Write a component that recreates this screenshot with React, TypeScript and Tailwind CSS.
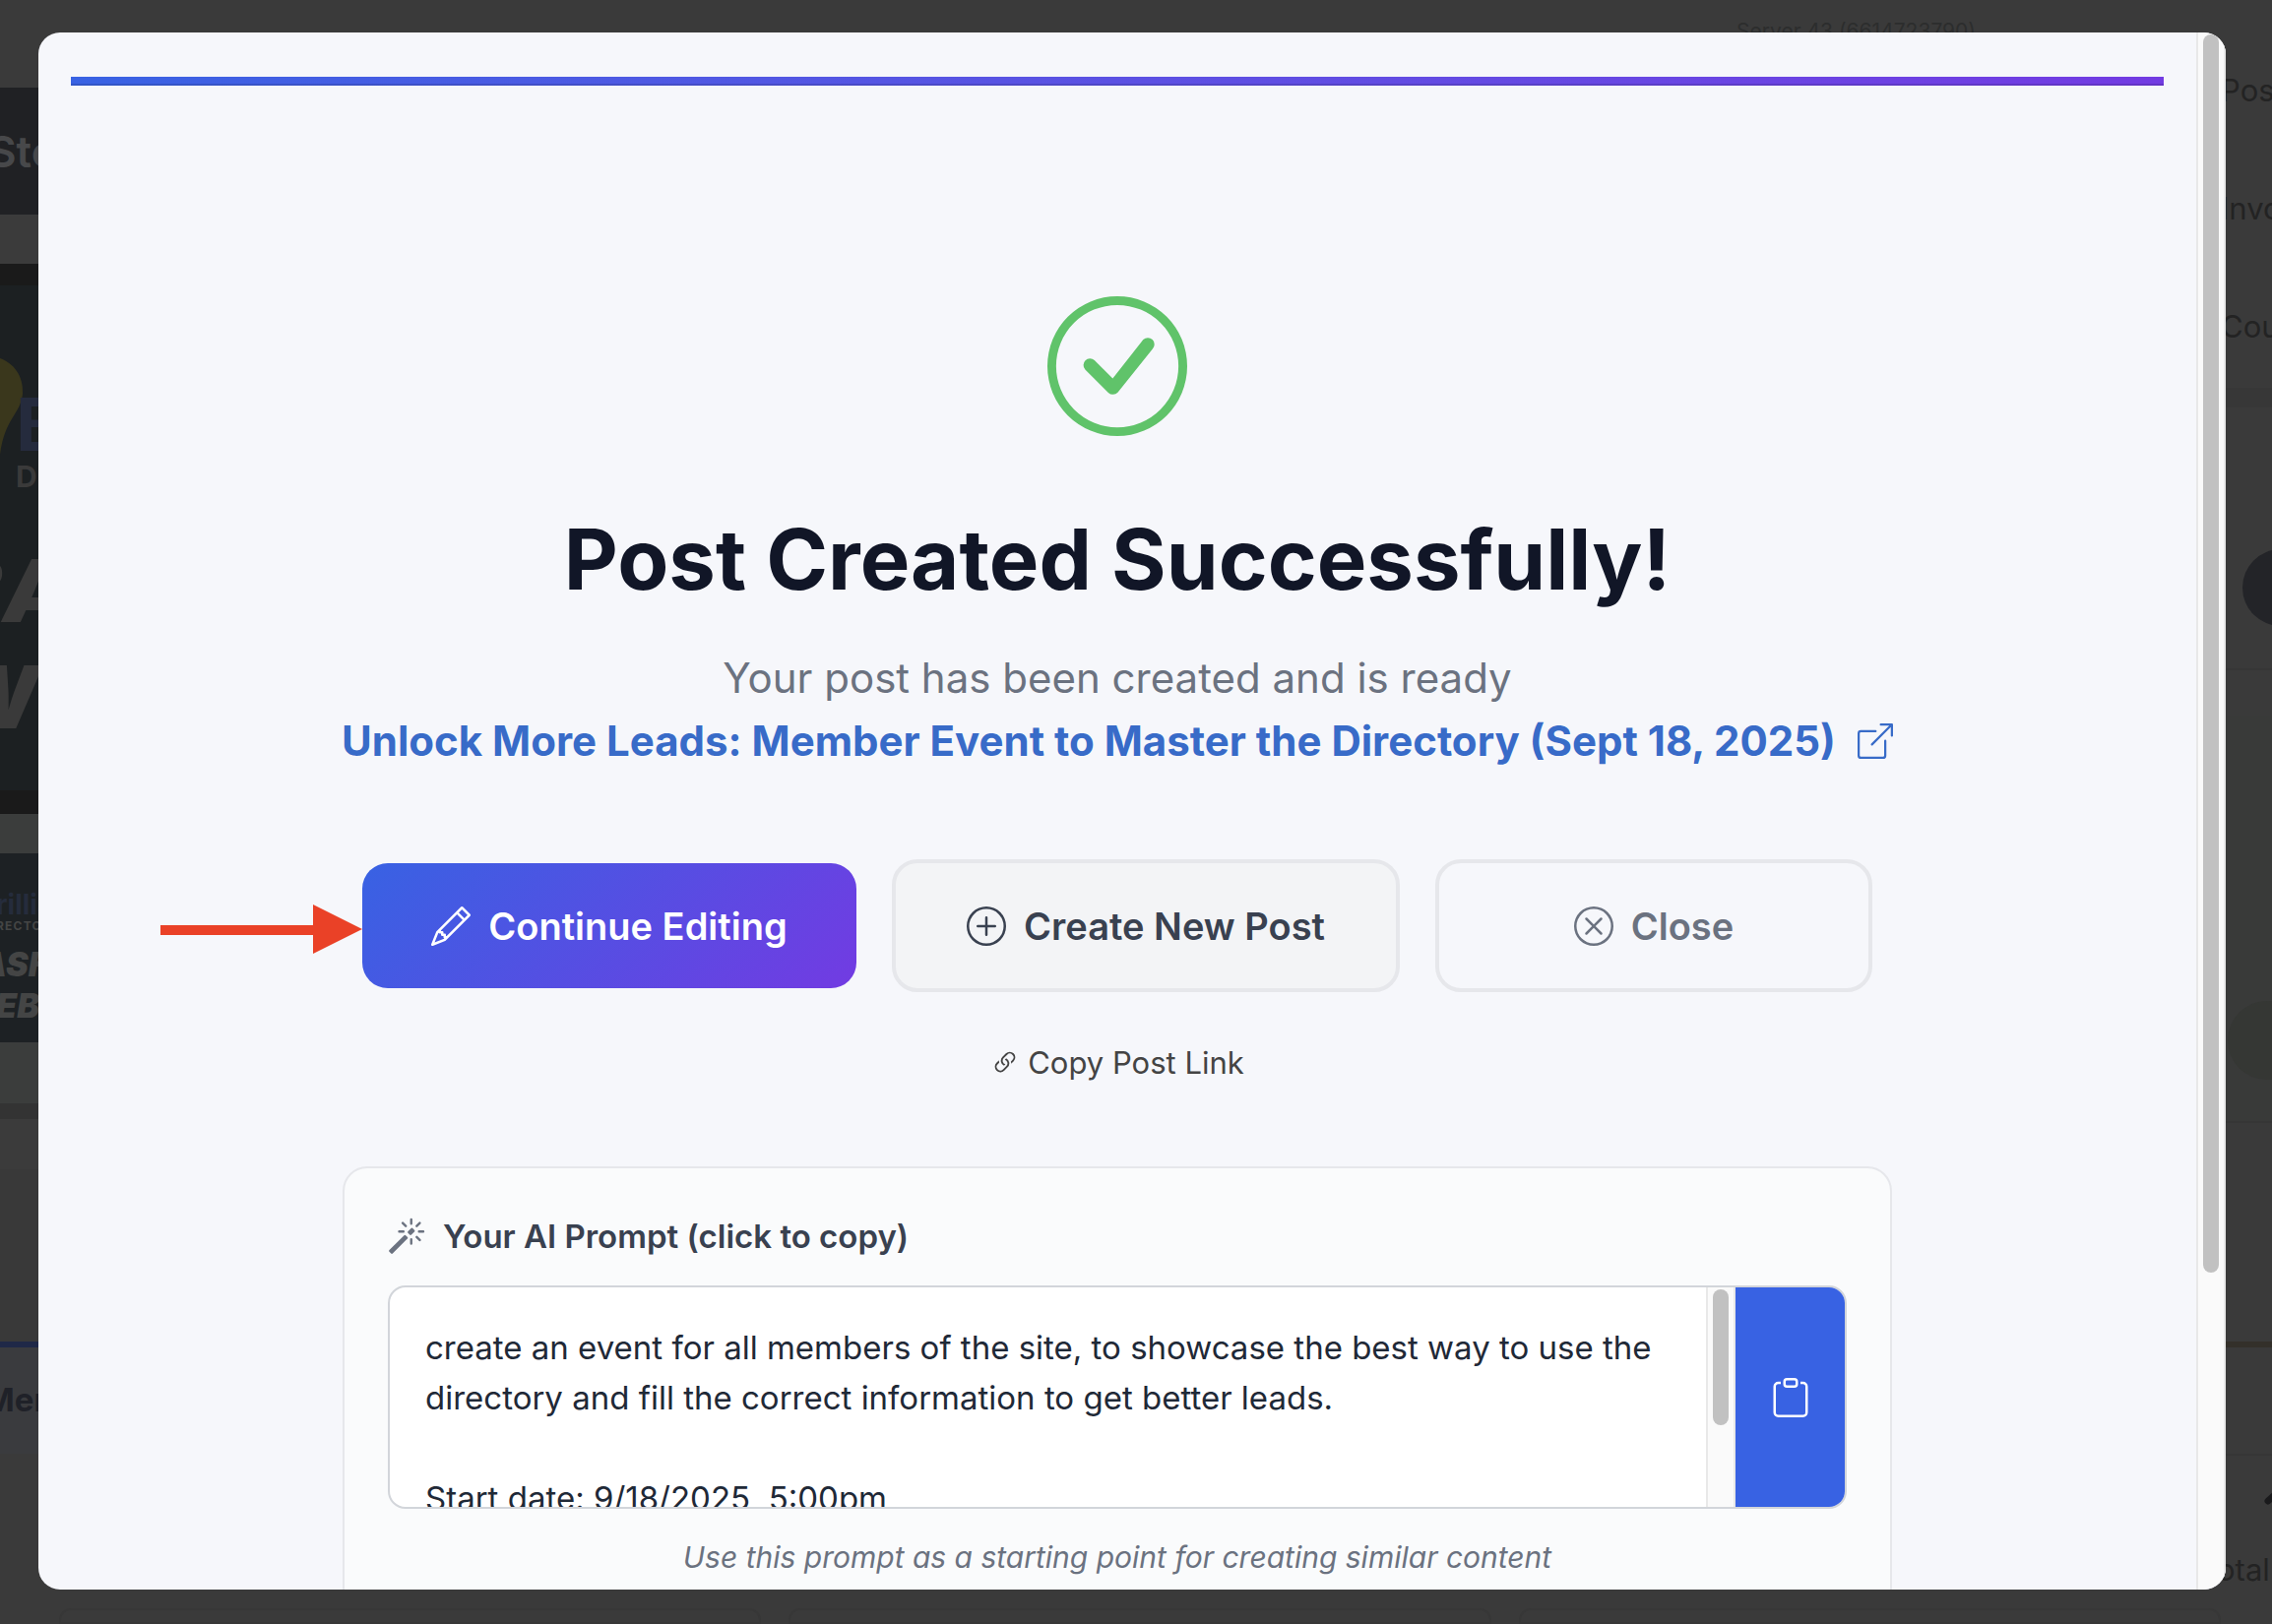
import type { ReactNode } from 'react';
import {
  BsBoxArrowUpRight,
  BsCheckCircle,
  BsClipboard,
  BsLink45Deg,
  BsMagic,
  BsPencil,
  BsPlusCircle,
  BsXCircle,
} from 'react-icons/bs';

const PROMPT =
  'create an event for all members of the site, to showcase the best way to use the directory and fill the correct information to get better leads.\n\nStart date: 9/18/2025  5:00pm';

function LeftPreview() {
  return (
    <div className="flex w-[60px] shrink-0 flex-col overflow-hidden whitespace-nowrap">
      <div className="h-[89px] shrink-0" />
      <div className="flex h-[129px] shrink-0 items-center bg-[#202124] text-[44px] font-semibold text-[#47484a]">
        <span className="-ml-3">Sto</span>
      </div>
      <div className="h-[50px] shrink-0 bg-[#3b3b3b]" />
      <div className="h-[22px] shrink-0 bg-[#1a1a1a]" />
      <div className="h-[513px] shrink-0 overflow-hidden bg-[#1c2022] text-[#3a3a3a]">
        <div className="flex h-[256px] items-start">
          <svg viewBox="0 0 24 104" className="mt-[74px] h-[104px] w-6 shrink-0" fill="#3a371c" aria-hidden="true">
            <path d="M0 0C14 5 24 18 23 36C21 57 5 60 0 98Z" />
          </svg>
          <div className="-ml-2 mt-[104px] flex flex-col">
            <span className="text-[74px] font-bold leading-[74px] text-[#252b3d]">B</span>
            <span className="text-[30px] font-bold leading-8">D</span>
          </div>
        </div>
        <p className="-ml-14 text-[88px] font-black italic leading-[108px]">BA</p>
        <p className="-ml-14 text-[88px] font-black italic leading-[108px]">WE</p>
      </div>
      <div className="h-6 shrink-0 bg-[#1a1a1a]" />
      <div className="h-10 shrink-0 bg-[#3b3d3c]" />
      <div className="h-[192px] shrink-0 overflow-hidden bg-[#1d2124] pt-9 text-[#444545]">
        <p className="-ml-1 text-[28px] font-bold leading-8 text-[#252c3c]">rillia</p>
        <p className="-ml-1 text-xs font-bold leading-3 tracking-widest">RECTO</p>
        <p className="-ml-5 mt-3 text-[34px] font-black italic leading-[42px]">ASH</p>
        <p className="-ml-1 text-[34px] font-black italic leading-[42px]">EBI</p>
      </div>
      <div className="h-[62px] shrink-0 bg-[#3b3d3c]" />
      <div className="h-4 shrink-0 bg-[#333333]" />
      <div className="h-[51px] shrink-0 bg-[#3b3b3b]" />
      <div className="h-[175px] shrink-0 bg-[#393939]" />
      <div className="flex h-[114px] shrink-0 items-center border-t-[6px] border-[#1f2847] bg-[#3a3b3e] text-[33px] font-bold text-[#1f2128]">
        <span className="-ml-4">Mem</span>
      </div>
    </div>
  );
}

function RightPreview() {
  return (
    <div className="flex w-[52px] shrink-0 flex-col overflow-hidden whitespace-nowrap text-[31px] text-[#232323]">
      <div className="flex h-[394px] shrink-0 flex-col pt-8">
        <span className="h-[120px] leading-[120px]">Post</span>
        <span className="h-[120px] leading-[120px]">Invo</span>
        <span className="h-[120px] leading-[120px]">Cou</span>
      </div>
      <div className="h-[287px] shrink-0 border-t-[20px] border-b-2 border-t-[#373737] border-b-[#363636] pt-36">
        <div className="ml-[22px] size-[78px] rounded-full bg-[#232428]" />
      </div>
      <div className="h-[46px] shrink-0" />
      <div className="h-[414px] shrink-0 border-b-2 border-b-[#363636] bg-[#393a39] pt-[290px]">
        <div className="ml-[7px] size-20 rounded-full bg-[#353734]" />
      </div>
      <div className="h-[222px] shrink-0" />
      <div className="h-[116px] shrink-0 border-t-[6px] border-b-2 border-t-[#33302a] border-b-[#363636]" />
      <svg viewBox="0 0 52 60" className="h-[60px] w-[52px] shrink-0" stroke="#1a1a1c" strokeWidth="7" strokeLinecap="round" aria-hidden="true">
        <path d="M48 46L58 37" />
      </svg>
      <span className="-ml-1 mt-[30px] leading-[52px]">otal</span>
    </div>
  );
}

function Backdrop() {
  return (
    <div aria-hidden="true" className="absolute inset-0 flex overflow-hidden bg-[#3a3a3a]">
      <LeftPreview />
      <div className="flex flex-1 flex-col justify-between">
        <div className="flex h-10 justify-end overflow-hidden pr-[249px]">
          <span className="pt-[18px] text-[21px] leading-7 text-[#2c2d2d]">Server 43 (6614723790)</span>
        </div>
        <div className="flex h-4 gap-7 overflow-hidden">
          <div className="flex-1 rounded-t-xl border-2 border-[#373737]" />
          <div className="flex-1 rounded-t-xl border-2 border-[#373737]" />
          <div className="flex-1 rounded-t-xl border-2 border-[#373737]" />
        </div>
      </div>
      <RightPreview />
    </div>
  );
}

function ActionButton({ icon, label, className }: { icon: ReactNode; label: string; className: string }) {
  return (
    <button
      type="button"
      className={`flex items-center justify-center gap-[18px] rounded-[26px] px-[70px] text-[38px] leading-[56px] font-semibold ${className}`}
    >
      {icon}
      {label}
    </button>
  );
}

function Arrow() {
  return (
    <svg
      viewBox="0 0 205 50"
      className="absolute top-[46px] right-full h-[50px] w-[205px]"
      fill="#ea4127"
      aria-hidden="true"
    >
      <path d="M0 21H155V0L205 25L155 50V31H0Z" />
    </svg>
  );
}

function PromptCard() {
  return (
    <section className="mt-[81px] w-full rounded-t-[25px] border-2 border-[#e6e7eb] bg-[#fafbfc] p-11">
      <label htmlFor="prompt" className="flex items-center gap-[18px] text-[33px] leading-[50px] font-semibold text-[#394150]">
        <BsMagic className="size-[38px] text-[#6b7280]" />
        Your AI Prompt (click to copy)
      </label>
      <div className="mt-[25px] flex h-[227px] overflow-hidden rounded-[18px] border-2 border-[#d2d5da] bg-white">
        <textarea
          id="prompt"
          readOnly
          defaultValue={PROMPT}
          className="min-w-0 flex-1 resize-none overflow-hidden px-9 pt-9 text-[33px] leading-[51px] text-[#1f2937] outline-none"
        />
        <div className="flex w-[30px] shrink-0 justify-center border-x-2 border-[#e8e8e8] bg-[#fafafa] pt-0.5">
          <div className="h-[138px] w-4 rounded-full bg-[#c1c1c1]" />
        </div>
        <button
          type="button"
          aria-label="Copy prompt"
          className="flex w-[111px] shrink-0 items-center justify-center bg-[#3862e3] text-white"
        >
          <BsClipboard className="size-10" />
        </button>
      </div>
      <p className="mt-[27px] text-center text-[30px] leading-[44px] text-[#6b7280] italic">
        Use this prompt as a starting point for creating similar content
      </p>
    </section>
  );
}

export default function App() {
  return (
    <div className="relative h-screen overflow-hidden font-['Inter',sans-serif]">
      <Backdrop />
      <div className="relative h-full pt-[33px] pr-[47px] pb-[35px] pl-[39px]">
        <div role="dialog" aria-modal="true" aria-labelledby="title" className="flex h-full overflow-hidden rounded-[22px] bg-[#f6f7fb]">
          <main className="min-w-0 flex-1 overflow-hidden px-[33px] pt-[45px]">
            <div className="h-[9px] bg-linear-to-r from-[#3862e3] to-[#723be2] shadow-[inset_0_-2px_0_rgba(0,0,0,0.12)]" />
            <div className="mx-auto flex max-w-[1574px] flex-col items-center pt-[214px]">
              <BsCheckCircle className="size-[142px] text-[#60c36a]" />
              <h1 id="title" className="mt-[78px] text-center text-[85px] leading-[96px] font-bold text-[#111627]">
                Post Created Successfully!
              </h1>
              <p className="mt-10 text-center text-[42px] leading-[64px] text-[#6b7280]">
                Your post has been created and is ready
              </p>
              <a
                href="#post"
                className="flex items-center gap-[22px] text-[42px] leading-[64px] font-bold whitespace-nowrap text-[#386bc8]"
              >
                Unlock More Leads: Member Event to Master the Directory (Sept 18, 2025)
                <BsBoxArrowUpRight className="size-9 shrink-0" />
              </a>
              <div className="relative mt-[88px] flex items-center gap-9">
                <Arrow />
                <ActionButton
                  icon={<BsPencil className="size-10" />}
                  label="Continue Editing"
                  className="h-[127px] min-w-[502px] bg-[linear-gradient(135deg,#3862e3,#723be2)] text-white"
                />
                <ActionButton
                  icon={<BsPlusCircle className="size-10" />}
                  label="Create New Post"
                  className="h-[135px] min-w-[516px] border-4 border-[#e6e7eb] bg-[#f3f4f6] text-[#394150]"
                />
                <ActionButton
                  icon={<BsXCircle className="size-10" />}
                  label="Close"
                  className="h-[135px] min-w-[444px] border-4 border-[#e6e7eb] text-[#6b7280]"
                />
              </div>
              <button type="button" className="mt-12 flex items-center gap-2 text-[31px] leading-[48px] text-[#444444]">
                <BsLink45Deg className="size-[30px]" />
                Copy Post Link
              </button>
              <PromptCard />
            </div>
          </main>
          <div className="flex w-[30px] shrink-0 justify-center border-x-2 border-[#e8e8e8] bg-[#fafafa] pt-0.5">
            <div className="h-[1258px] w-4 rounded-full bg-[#c1c1c1]" />
          </div>
        </div>
      </div>
    </div>
  );
}
